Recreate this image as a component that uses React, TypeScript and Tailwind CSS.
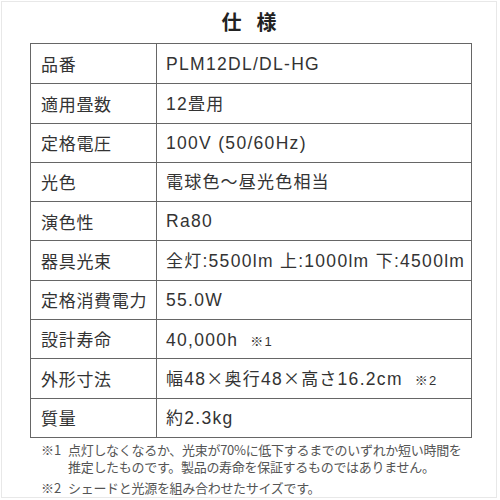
import React from "react";

const J = ({ children }: { children: React.ReactNode }) => (
  <span style={{ fontFamily: '"Noto Sans CJK JP", sans-serif' }} className="text-[17px] tracking-[1.2px]">
    {children}
  </span>
);

const rows: [string, React.ReactNode][] = [
  ["品番", "PLM12DL/DL-HG"],
  ["適用畳数", <>12<J>畳用</J></>],
  ["定格電圧", "100V (50/60Hz)"],
  ["光色", <J>電球色～昼光色相当</J>],
  ["演色性", "Ra80"],
  [
    "器具光束",
    <>
      <J>全灯</J>:5500lm <J>上</J>:1000lm <J>下</J>:4500lm
    </>,
  ],
  ["定格消費電力", "55.0W"],
  [
    "設計寿命",
    <>
      40,000h<span className="ml-[12px] text-[13px]"><J><span className="text-[13px]">※</span></J>1</span>
    </>,
  ],
  [
    "外形寸法",
    <>
      <J>幅</J>48<J>×奥行</J>48<J>×高さ</J>16.2cm
      <span className="ml-[12px] text-[13px]"><J><span className="text-[13px]">※</span></J>2</span>
    </>,
  ],
  ["質量", <><J>約</J>2.3kg</>],
];

export default function App() {
  return (
    <div
      className="w-[500px] h-[500px] bg-white"
      style={{ fontFamily: '"Noto Sans CJK JP", "Noto Sans", sans-serif' }}
    >
      <div className="ml-px mt-px w-[496px] h-[497px] border border-[#e8e8e8] flex flex-col">
        <div className="h-[41px] flex items-center justify-center gap-[15px] text-[20px] font-bold text-[#222] leading-none pb-[2px]">
          <span>仕</span>
          <span>様</span>
        </div>
        <div className="ml-[28px] w-[442px] border-[1.5px] border-[#666] flex flex-col">
          {rows.map(([k, v], i) => (
            <div
              key={i}
              className={`flex h-[39.3px] ${i > 0 ? "border-t-[1.5px] border-[#666]" : ""}`}
            >
              <div className="w-[126px] shrink-0 border-r-[1.5px] border-[#666] flex items-center pl-[10px] text-[17px] text-[#333] tracking-[0.7px]">
                {k}
              </div>
              <div
                className="flex items-center pl-[9px] text-[17.5px] text-[#333] tracking-[1.3px] whitespace-nowrap"
                style={{ fontFamily: '"Liberation Sans", "Noto Sans CJK JP", sans-serif' }}
              >
                <span>{v}</span>
              </div>
            </div>
          ))}
        </div>
        <div className="ml-[39px] mt-[3px] text-[13px] leading-[17px] text-[#555] tracking-[-0.3px]">
          <div className="flex">
            <span className="w-[27px] shrink-0 tracking-normal">※1</span>
            <div className="flex flex-col">
              <span>点灯しなくなるか、光束が70%に低下するまでのいずれか短い時間を</span>
              <span>推定したものです。製品の寿命を保証するものではありません。</span>
            </div>
          </div>
          <div className="flex mt-[4px]">
            <span className="w-[27px] shrink-0 tracking-normal">※2</span>
            <span>シェードと光源を組み合わせたサイズです。</span>
          </div>
        </div>
      </div>
    </div>
  );
}
